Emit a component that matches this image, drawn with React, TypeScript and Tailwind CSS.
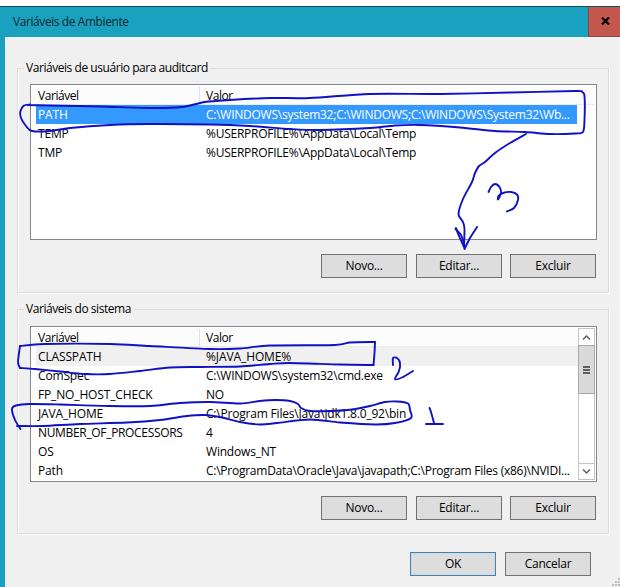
import React from "react";

interface Variable {
  name: string;
  value: string;
  nameClass?: string;
  valueClass?: string;
}

type Point = [number, number];

const userVariables: Variable[] = [
  { name: "PATH", value: "C:\\WINDOWS\\system32;C:\\WINDOWS;C:\\WINDOWS\\System32\\Wb..." },
  { name: "TEMP", value: "%USERPROFILE%\\AppData\\Local\\Temp" },
  { name: "TMP", value: "%USERPROFILE%\\AppData\\Local\\Temp" },
];

const systemVariables: Variable[] = [
  { name: "CLASSPATH", value: "%JAVA_HOME%", valueClass: "tracking-[-0.1px]" },
  { name: "ComSpec", value: "C:\\WINDOWS\\system32\\cmd.exe" },
  { name: "FP_NO_HOST_CHECK", value: "NO" },
  { name: "JAVA_HOME", value: "C:\\Program Files\\Java\\jdk1.8.0_92\\bin", valueClass: "tracking-[-0.2px]" },
  { name: "NUMBER_OF_PROCESSORS", value: "4", nameClass: "tracking-[-0.33px]" },
  { name: "OS", value: "Windows_NT", valueClass: "tracking-[-0.2px]" },
  { name: "Path", value: "C:\\ProgramData\\Oracle\\Java\\javapath;C:\\Program Files (x86)\\NVIDI..." },
];

// Pen strokes drawn over the dialog
const strokes: Point[][] = [
  // loop around PATH
  [[28, 105], [50, 105.5], [100, 106.5], [150, 108], [182, 107], [205, 102], [230, 100], [270, 98], [310, 98], [370, 94], [440, 94], [510, 92.5], [575, 91], [582, 92], [584.5, 96], [584.5, 120], [583, 132], [575, 133.5], [550, 134], [525, 132], [495, 131], [460, 127.5], [420, 125], [395, 125.5], [370, 128], [320, 130], [290, 129], [250, 126], [210, 124.5], [150, 124], [110, 125], [70, 128], [50, 131], [32, 131], [26, 126], [21, 118], [20.5, 111], [24, 105.5], [30, 104.5]],
  // arrow to Editar
  [[526, 134], [510, 143], [495, 153], [485, 162], [479, 166], [475, 173], [472, 182], [463, 199], [458.5, 214], [463, 222], [464.5, 229], [464, 246]],
  [[456, 228], [459, 236], [464.5, 248]],
  [[455.5, 229], [461, 235], [465, 247]],
  [[477, 227], [470, 238], [464.5, 249]],
  // 3
  [[488.5, 192], [491, 187], [495, 184], [499.5, 187], [501, 193], [498, 199.5], [498.5, 196], [503, 193], [511, 192], [517, 194.5], [518, 200], [514, 208], [507, 211.5]],
  // box around CLASSPATH
  [[20, 346], [45, 344], [110, 344], [150, 346], [210, 349], [240, 348.5], [270, 345.5], [335, 345], [350, 342.5], [375, 342]],
  [[375, 342], [374.5, 353], [373.5, 365]],
  [[373.5, 365], [340, 364.5], [290, 363], [270, 364], [240, 366.5], [200, 367], [170, 367.5], [140, 371], [110, 374], [85, 374], [60, 371.5], [35, 369], [20, 368]],
  [[20, 368], [18, 362], [20, 346]],
  // 2
  [[393, 365], [393, 358], [397, 358], [400, 363], [399, 371], [395, 379], [402, 377.5], [413, 371]],
  // loop around JAVA_HOME
  [[20.5, 429], [15, 420], [12, 409], [16, 405.5], [30, 404], [60, 404.5], [110, 406], [150, 406], [180, 403], [210, 402], [240, 403.5], [260, 401], [275, 400], [290, 401], [298, 404], [301, 408], [310, 411], [330, 411], [352, 409.5], [370, 406], [385, 402], [397, 401.5], [408, 403.5], [410, 410], [411, 418], [395, 423], [375, 424.5], [340, 422.5], [310, 419.5], [277, 423], [260, 424.5], [240, 422], [222, 417.5], [205, 415], [187, 416], [160, 420], [127, 422.5], [80, 424], [43, 426], [17, 426]],
  // 1
  [[429.5, 408], [431, 412], [434, 423]],
  [[426, 424], [443, 424]],
];

// Catmull-Rom spline through the stroke's points
const toPath = (pts: Point[]): string => {
  let d = `M${pts[0][0]} ${pts[0][1]}`;
  for (let i = 0; i < pts.length - 1; i++) {
    const p0 = pts[i - 1] || pts[i];
    const p1 = pts[i];
    const p2 = pts[i + 1];
    const p3 = pts[i + 2] || p2;
    const k = 7;
    d += `C${p1[0] + (p2[0] - p0[0]) / k} ${p1[1] + (p2[1] - p0[1]) / k} ${p2[0] - (p3[0] - p1[0]) / k} ${p2[1] - (p3[1] - p1[1]) / k} ${p2[0]} ${p2[1]}`;
  }
  return d;
};

const Button: React.FC<{ label: string; primary?: boolean }> = ({ label, primary }) => (
  <button
    className={
      primary
        ? "h-6 w-[86px] border border-[#4a7ea8] bg-[#dddddd] leading-[22px] tracking-[-0.3px] shadow-[inset_0_0_0_1px_#c8dde8]"
        : "h-6 w-[86px] border border-[#707070] bg-[#dddddd] leading-[22px] tracking-[-0.25px]"
    }
  >
    {label}
  </button>
);

const Scrollbar: React.FC = () => (
  <div className="flex w-[17px] shrink-0 flex-col border border-[#c3c3c3] bg-white">
    <div className="flex h-[16px] items-center justify-center">
      <svg width="9" height="7" viewBox="0 0 9 7" fill="none" stroke="#606060" strokeWidth="1.5">
        <path d="M1 5.5L4.5 2L8 5.5" />
      </svg>
    </div>
    <div className="-mx-px flex h-[49px] flex-col items-center justify-center gap-px border border-[#a8a8a8] bg-[#dadada]">
      <div className="h-[2px] w-[7px] bg-[#606060]" />
      <div className="h-[2px] w-[7px] bg-[#606060]" />
      <div className="h-[2px] w-[7px] bg-[#606060]" />
    </div>
    <div className="flex-1" />
    <div className="flex h-[16px] items-center justify-center border-t border-[#c3c3c3]">
      <svg width="9" height="7" viewBox="0 0 9 7" fill="none" stroke="#606060" strokeWidth="1.5">
        <path d="M1 1.5L4.5 5L8 1.5" />
      </svg>
    </div>
  </div>
);

interface VariableListProps {
  title: string;
  variables: Variable[];
  selectedClass: string;
  listClass: string;
  scrollable?: boolean;
}

const VariableList: React.FC<VariableListProps> = ({ title, variables, selectedClass, listClass, scrollable }) => (
  <fieldset className="h-[234px] w-[592px] border border-[#dcdcdc] pl-3 shadow-[1px_1px_0_#ffffff,inset_1px_0_0_#ffffff]">
    <legend className="-ml-[6px] h-[18px] bg-[#f0f0f0] px-[2px] leading-[18px] tracking-[-0.45px]">{title}</legend>
    <div className={`flex h-[156px] w-[567px] border border-[#828790] bg-white p-px ${listClass}`}>
      <div className="min-w-0 flex-1">
        <div className="flex h-[19px] items-center border-b border-[#ececec] bg-[#fcfcfc] pl-[6px] pt-px tracking-[-0.45px]">
          <div className="w-[161px]">Variável</div>
          <div className="flex h-full flex-1 items-center border-l border-[#dfe3e8] pl-[6px]">Valor</div>
        </div>
        {variables.map((variable, index) => (
          <div
            key={variable.name}
            className={
              index === 0
                ? `ml-[4px] flex h-[19px] items-center pl-[2px] ${selectedClass}`
                : "ml-[4px] flex h-[19px] items-center pl-[2px]"
            }
          >
            <div className={`w-[168px] shrink-0 ${variable.nameClass ?? "tracking-[-0.15px]"}`}>{variable.name}</div>
            <div className={`whitespace-nowrap ${variable.valueClass ?? "tracking-[-0.25px]"}`}>{variable.value}</div>
          </div>
        ))}
      </div>
      {scrollable && <Scrollbar />}
    </div>
    <div className="mt-[14px] ml-[291px] flex">
      <Button label="Novo..." />
      <div className="ml-[9px]">
        <Button label="Editar..." />
      </div>
      <div className="ml-[8px]">
        <Button label="Excluir" />
      </div>
    </div>
  </fieldset>
);

const App: React.FC = () => {
  return (
    <div className="relative flex h-[587px] w-[620px] flex-col overflow-hidden bg-white pt-[6px] font-['Open_Sans','Noto_Sans',sans-serif] text-[12px] leading-[18px] text-black">
      <div className="flex h-[31px] shrink-0 justify-between border-t border-[#0f4f5c] bg-[#1aa1c0]">
        <div className="pl-[13px] leading-[30px] tracking-[-0.42px] text-[#10282e]">Variáveis de Ambiente</div>
        <button className="flex w-8 items-center justify-center border-b border-l border-[#7d4a46] bg-[#c4584e] pb-px pl-[2px]">
          <svg width="9" height="8" viewBox="0 0 9 8" stroke="#000" strokeWidth="2.2">
            <path d="M1 0.5L8 7.5M8 0.5L1 7.5" />
          </svg>
        </button>
      </div>

      <div className="flex flex-1 flex-col border-l-[5px] border-[#1aa1c0] bg-[#f0f0f0] pl-3 pt-[22px]">
        <VariableList
          title="Variáveis de usuário para auditcard"
          variables={userVariables}
          listClass="mt-[7px]"
          selectedClass="mr-[18px] bg-[#3399ff] text-white"
        />
        <div className="mt-[7px]">
          <VariableList
            title="Variáveis do sistema"
            variables={systemVariables}
            listClass="mt-2"
            selectedClass="bg-[#f0f0f0]"
            scrollable
          />
        </div>
        <div className="mt-[18px] ml-[393px] flex gap-[9px]">
          <Button label="OK" primary />
          <Button label="Cancelar" />
        </div>
      </div>

      {/* resize grip */}
      <svg className="absolute bottom-0 right-0" width="8" height="10" viewBox="0 0 8 10" fill="#bdbdbd">
        <path d="M6 1h2v2h-2zM3 4h2v2h-2zM6 4h2v2h-2zM0 7h2v2h-2zM3 7h2v2h-2zM6 7h2v2h-2z" />
      </svg>

      <svg
        className="pointer-events-none absolute inset-0"
        width="620"
        height="587"
        fill="none"
        stroke="#1010c4"
        strokeWidth="1.9"
        strokeLinecap="round"
        strokeLinejoin="round"
      >
        {strokes.map((points, index) => (
          <path key={index} d={toPath(points)} />
        ))}
      </svg>
    </div>
  );
};

export default App;
